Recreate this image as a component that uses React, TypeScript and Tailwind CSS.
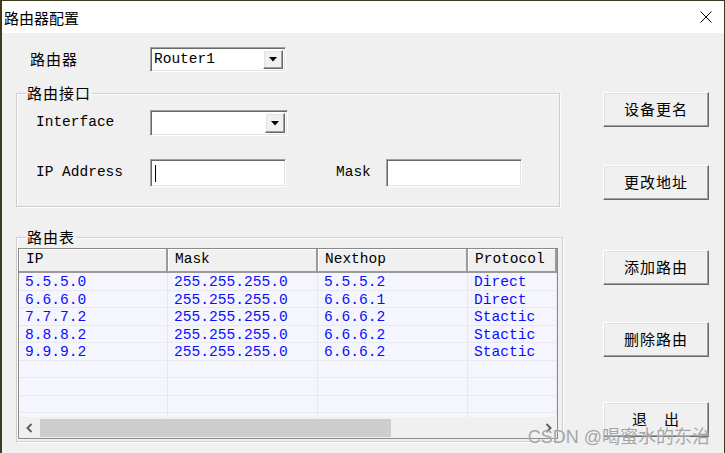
import React from 'react';

const cjk = "font-['Noto_Sans_CJK_SC',sans-serif]";
const mono = "font-['Liberation_Mono','Noto_Sans_CJK_SC',monospace]";

/* ─── Win classic bevels ─── */
const sunken =
  'border border-t-[#a0a0a0] border-l-[#a0a0a0] border-r-white border-b-white shadow-[inset_1px_1px_0_#696969,inset_-1px_-1px_0_#e3e3e3] bg-white';
const raised =
  'border border-t-white border-l-white border-r-[#696969] border-b-[#696969] shadow-[inset_-1px_-1px_0_#a0a0a0,inset_1px_1px_0_#e3e3e3] bg-[#f0f0f0]';

const ComboBox = ({ value, width, height }: { value?: string; width: string; height: string }) => (
  <div className={`${sunken} ${width} ${height} flex items-center p-[2px]`}>
    <span className={`${mono} flex-1 pl-[1px] text-[14.5px] leading-none text-black`}>{value}</span>
    <div className={`${raised} w-[20px] h-full flex items-center justify-center`}>
      <svg width="8" height="5" viewBox="0 0 8 5">
        <path d="M0 0 H8 L4 4.5 Z" fill="#000" />
      </svg>
    </div>
  </div>
);

const PushButton = ({ label }: { label: string }) => (
  <button
    className={`${raised} ${cjk} w-[106px] h-[35px] flex items-center justify-center text-[15px] tracking-[1px] text-black`}
  >
    {label}
  </button>
);

const GroupBox = ({ title, className, children }: { title: string; className: string; children: React.ReactNode }) => (
  <fieldset
    className={`border border-[#cdcdcd] shadow-[inset_1px_1px_0_#fff,1px_1px_0_#fff] p-0 m-0 ${className}`}
  >
    <legend className={`${cjk} ml-[9px] px-[1px] text-[15px] leading-[18px] tracking-[1px] text-black`}>
      {title}
    </legend>
    {children}
  </fieldset>
);

const routes = [
  { ip: '5.5.5.0', mask: '255.255.255.0', next: '5.5.5.2', proto: 'Direct' },
  { ip: '6.6.6.0', mask: '255.255.255.0', next: '6.6.6.1', proto: 'Direct' },
  { ip: '7.7.7.2', mask: '255.255.255.0', next: '6.6.6.2', proto: 'Stactic' },
  { ip: '8.8.8.2', mask: '255.255.255.0', next: '6.6.6.2', proto: 'Stactic' },
  { ip: '9.9.9.2', mask: '255.255.255.0', next: '6.6.6.2', proto: 'Stactic' },
  { ip: '', mask: '', next: '', proto: '' },
  { ip: '', mask: '', next: '', proto: '' },
  { ip: '', mask: '', next: '', proto: '' },
  { ip: '', mask: '', next: '', proto: '' },
];

const headers = ['IP', 'Mask', 'Nexthop', 'Protocol'];

export default function App() {
  return (
    <div className="relative w-[725px] h-[453px] overflow-hidden bg-[#f0f0f0] border-l-2 border-t border-r border-[#3e3b1c]">
      {/* Title bar */}
      <div className="h-[32px] bg-white flex items-center justify-between pl-[2px] pr-[12px]">
        <span className={`${cjk} text-[15px] text-black leading-none`}>路由器配置</span>
        <svg width="12" height="12" viewBox="0 0 12 12">
          <path d="M0.5 0.5 L11.5 11.5 M11.5 0.5 L0.5 11.5" stroke="#000" strokeWidth="1" />
        </svg>
      </div>

      <div className="flex">
        {/* Left column */}
        <div className="pl-[14px] w-[561px] flex flex-col">
          {/* Router row */}
          <div className="mt-[14px] flex items-center h-[25px]">
            <span className={`${cjk} w-[134px] pl-[14px] text-[15px] tracking-[1px] text-black`}>路由器</span>
            <ComboBox value="Router1" width="w-[136px]" height="h-[25px]" />
          </div>

          {/* Interface group */}
          <GroupBox title="路由接口" className="mt-[12px] w-[544px]">
            <div className="pl-[19px] pt-[8px] pb-[19px] flex flex-col">
              <div className="flex items-center h-[26px]">
                <span className={`${mono} w-[114px] text-[14.5px] text-black`}>Interface</span>
                <ComboBox width="w-[138px]" height="h-[26px]" />
              </div>
              <div className="mt-[23px] flex items-center h-[28px]">
                <span className={`${mono} w-[114px] text-[14.5px] text-black`}>IP Address</span>
                <div className={`${sunken} w-[136px] h-[28px] flex items-center pl-[4px]`}>
                  <span className="w-px h-[17px] bg-black" />
                </div>
                <span className={`${mono} ml-[50px] w-[50px] text-[14.5px] text-black`}>Mask</span>
                <div className={`${sunken} w-[136px] h-[28px]`} />
              </div>
            </div>
          </GroupBox>

          {/* Route table group */}
          <GroupBox title="路由表" className="mt-[21px] w-[547px]">
            <div className="pl-[1px] pr-[4px] pt-[2px] pb-[2px]">
              <div className="w-[540px] h-[191px] border border-[#8a8a8a] bg-[#f5f6fd] flex flex-col overflow-hidden">
                {/* Header */}
                <div className="grid grid-cols-[149px_150px_150px_1fr] h-[22px] shrink-0">
                  {headers.map((h) => (
                    <div
                      key={h}
                      className={`${mono} bg-[#f0f0f0] border-r-2 border-b-2 border-r-[#9a9a9a] border-b-[#9a9a9a] shadow-[inset_1px_1px_0_#fff] pl-[7px] flex items-center text-[14.5px] text-black`}
                    >
                      {h}
                    </div>
                  ))}
                </div>

                {/* Rows */}
                <div className="flex-1 overflow-hidden pt-[2px]">
                  {routes.map((r, i) => (
                    <div
                      key={i}
                      className="grid grid-cols-[149px_150px_150px_1fr] h-[17.5px] border-b border-[#e8e8ef]"
                    >
                      {[r.ip, r.mask, r.next, r.proto].map((v, j) => (
                        <div
                          key={j}
                          className={`${mono} border-r border-[#e6e6ec] pl-[6px] text-[14.6px] leading-[18px] text-[#0c0cff]`}
                        >
                          {v}
                        </div>
                      ))}
                    </div>
                  ))}
                </div>

                {/* Horizontal scrollbar */}
                <div className="h-[21px] shrink-0 bg-[#f0f0f0] flex items-center">
                  <div className="w-[21px] h-full flex items-center justify-center">
                    <svg width="7" height="10" viewBox="0 0 7 10">
                      <path d="M5.5 1 L1.5 5 L5.5 9" fill="none" stroke="#606060" strokeWidth="2" />
                    </svg>
                  </div>
                  <div className="w-[351px] h-[18px] bg-[#cdcdcd]" />
                  <div className="flex-1" />
                  <div className="w-[17px] h-full flex items-center justify-center">
                    <svg width="7" height="10" viewBox="0 0 7 10">
                      <path d="M1.5 1 L5.5 5 L1.5 9" fill="none" stroke="#606060" strokeWidth="2" />
                    </svg>
                  </div>
                </div>
              </div>
            </div>
          </GroupBox>
        </div>

        {/* Right button column */}
        <div className="ml-[40px] pt-[59px] flex flex-col">
          <PushButton label="设备更名" />
          <div className="mt-[38px]">
            <PushButton label="更改地址" />
          </div>
          <div className="mt-[50px]">
            <PushButton label="添加路由" />
          </div>
          <div className="mt-[37px]">
            <PushButton label="删除路由" />
          </div>
          <div className="mt-[45px]">
            <PushButton label="退　出" />
          </div>
        </div>
      </div>

      {/* Watermark */}
      <span
        className={`absolute right-[14px] top-[427px] text-[18px] leading-none text-[#9c9c9c] opacity-90 font-['Liberation_Sans','Noto_Sans_CJK_SC',sans-serif] [text-shadow:0_0_1px_#fff]`}
      >
        CSDN @喝蜜水的东治
      </span>
    </div>
  );
}
